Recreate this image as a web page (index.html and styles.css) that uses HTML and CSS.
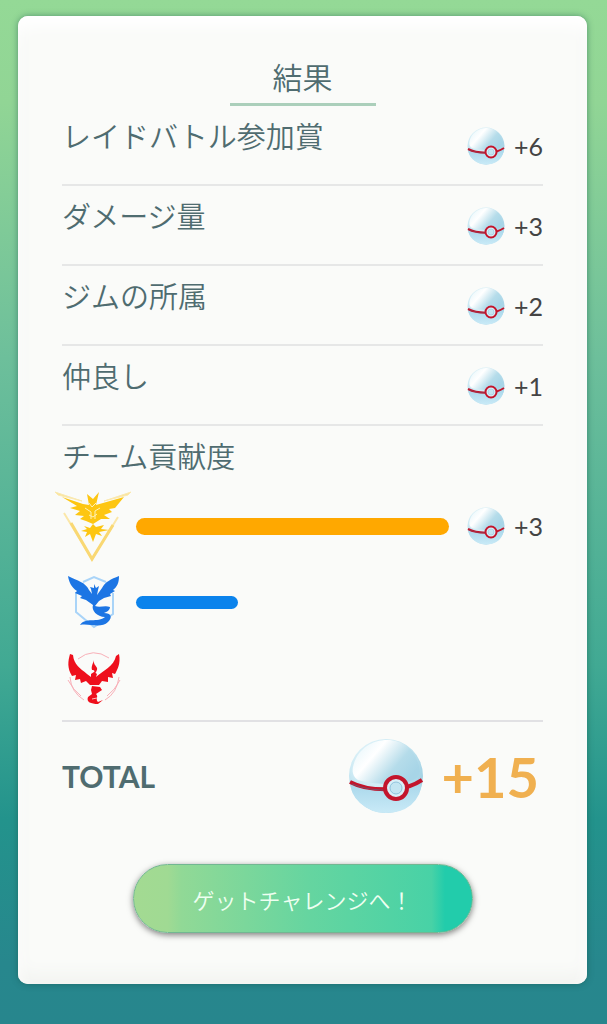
FILE: index.html
```html
<!DOCTYPE html>
<html lang="ja">
<head>
    <meta charset="UTF-8">
    <meta name="viewport" content="width=device-width, initial-scale=1.0">
    <title>結果</title>
    <link rel="stylesheet" href="styles.css">
</head>
<body>
    <!-- Shared ball drawing -->
    <svg class="defs" width="0" height="0" aria-hidden="true">
        <defs>
            <radialGradient id="ballBase" cx="38%" cy="30%" r="75%">
                <stop offset="0" stop-color="#f4fcfe"/>
                <stop offset="0.5" stop-color="#cdeaf4"/>
                <stop offset="1" stop-color="#92c9de"/>
            </radialGradient>
            <linearGradient id="ballShine" x1="0.1" y1="0.1" x2="1" y2="0.6">
                <stop offset="0" stop-color="#e9f7fb"/>
                <stop offset="0.3" stop-color="#ffffff"/>
                <stop offset="0.7" stop-color="#b5dcea"/>
                <stop offset="1" stop-color="#a7d5e7"/>
            </linearGradient>
            <linearGradient id="ballLower" x1="0" y1="0" x2="0" y2="1">
                <stop offset="0" stop-color="#a5d5e9"/>
                <stop offset="1" stop-color="#c9eaf7"/>
            </linearGradient>
            <symbol id="ball" viewBox="0 0 74 76">
                <circle cx="37" cy="38" r="37" fill="url(#ballBase)"/>
                <path d="M1 43Q19 52 46 49Q62 48 73 42Q73 57 62 67Q52 75 37 75Q22 75 11 65Q1 56 1 43Z" fill="url(#ballLower)"/>
                <path d="M4 29C8 11 23 2 38 2C55 2 66 12 70 28C73 38 67 43 57 44C43 47 20 46 9 42C4 39 3 34 4 29Z" fill="url(#ballShine)"/>
                <path d="M1 44Q18 53 46 51Q61 50 73 42" fill="none" stroke="#c3152c" stroke-width="4"/>
                <path d="M3 46Q20 53 42 52" fill="none" stroke="#7d4a64" stroke-width="1"/>
                <circle cx="47" cy="50" r="11" fill="#d9eff8" stroke="#c3152c" stroke-width="4"/>
                <circle cx="47" cy="50" r="6" fill="#c3e5f2" stroke="#8fc3dc"/>
            </symbol>
        </defs>
    </svg>

    <main class="card">
        <h1 class="title">結果</h1>

        <ul class="reward-list">
            <li class="reward-row">
                <span class="label">レイドバトル参加賞</span>
                <span class="reward"><svg class="ball"><use href="#ball"/></svg>+6</span>
            </li>
            <li class="reward-row">
                <span class="label">ダメージ量</span>
                <span class="reward"><svg class="ball"><use href="#ball"/></svg>+3</span>
            </li>
            <li class="reward-row">
                <span class="label">ジムの所属</span>
                <span class="reward"><svg class="ball"><use href="#ball"/></svg>+2</span>
            </li>
            <li class="reward-row">
                <span class="label">仲良し</span>
                <span class="reward"><svg class="ball"><use href="#ball"/></svg>+1</span>
            </li>
        </ul>

        <section class="teams">
            <h2 class="label">チーム貢献度</h2>
            <div class="team-row">
                <svg class="emblem" viewBox="0 0 78 76" role="img" aria-label="黄チーム">
                    <path d="M0 4L27 13L3 7ZM76 4L49 13L73 7Z" fill="#fae49a" stroke="#fae9b0"/>
                    <path d="M9 25L37 71L63 29" fill="none" stroke="#fbe7a8" stroke-width="2"/>
                    <path d="M16 35L37 71L58 37" fill="none" stroke="#f9d873" stroke-width="3"/>
                    <path d="M7 9L28 16L34 17L32 6L38 11L44 4L41 17L48 15L69 9L60 20L54 21L57 24L49 27L55 31L46 31L38 36L31 33L25 31L29 28L20 27L25 23L15 20L22 18Z" fill="#fdc612"/>
                    <path d="M34 15L37 19L41 15M30 20L36 24V31M45 20L40 23V31M34 27L38 29L42 26" fill="none" stroke="#fff2b8" stroke-width="1"/>
                    <path d="M29 38L35 40L38 36L41 39L49 37L46 41L54 42L44 44L47 48L41 46L38 54L35 46L30 49L32 44L26 43L32 41Z" fill="#fdc612"/>
                </svg>
                <div class="track"><div class="bar bar-yellow"></div></div>
                <span class="reward"><svg class="ball"><use href="#ball"/></svg>+3</span>
            </div>
            <div class="team-row">
                <svg class="emblem" viewBox="0 0 78 76" role="img" aria-label="青チーム">
                    <path d="M21 28V48L39 63L58 50V29M28 18L39 13L51 18" fill="none" stroke="#a9d4f8" stroke-width="2"/>
                    <path d="M13 12C23 17 30 18 34 26L37 30L36 25L35 23L39 24L39 20L41 24L44 22L43 26L42 31L47 24C50 18 56 15 64 12C64 19 62 23 58 26L60 27L55 30L56 32L49 34L44 37L40 42C45 44 50 41 55 43C55 46 52 48 49 49C56 49 58 53 53 58C46 65 34 59 25 61C30 53 43 59 50 53C42 53 36 46 38 41L31 36L25 34L27 32L20 29L22 27C16 23 14 18 13 12Z" fill="#1c75e4"/>
                </svg>
                <div class="track"><div class="bar bar-blue"></div></div>
            </div>
            <div class="team-row">
                <svg class="emblem" viewBox="0 0 78 76" role="img" aria-label="赤チーム">
                    <path d="M23 19Q38 7 54 18M15 37Q16 52 29 60M64 37Q62 53 50 60M13 40Q18 50 26 56M65 40Q60 50 52 56" fill="none" stroke="#f8b0b8" stroke-width="1"/>
                    <path d="M15 14L18 15C19 25 25 28 32 34L36 37L36 34L39 32L42 34L41 37C48 31 59 26 61 16L64 14C66 24 62 30 60 34L57 33L58 38L53 37L53 42L47 41L44 45L35 45L31 41L26 43L25 39L20 40L21 35L17 36C12 28 13 21 15 14Z" fill="#ee0f1c"/>
                    <path d="M39 20C38 27 45 26 41 32L38 36C39 32 41 30 37 30C36 26 38 24 39 20ZM37 46L45 47L47 50L41 54C44 57 40 59 43 62L48 60L43 64C36 64 31 62 33 57L37 54L36 50Z" fill="#ee0f1c"/>
                    <path d="M37 59L42 58" stroke="#ffb5b9" stroke-width="1"/>
                </svg>
            </div>
        </section>

        <div class="total">
            <span class="total-label">TOTAL</span>
            <span class="total-reward"><svg class="ball ball-large"><use href="#ball"/></svg>+15</span>
        </div>

        <button class="challenge-btn" type="button">ゲットチャレンジへ！</button>
    </main>
</body>
</html>
```
FILE: styles.css
```css
* {
    margin: 0;
    padding: 0;
    box-sizing: border-box;
}

body {
    font-family: Lato, 'Noto Sans CJK JP', sans-serif;
    background: linear-gradient(180deg, #94d996 0%, #91d595 10%, #6dbf9b 35%, #41a993 65%, #23938c 80%, #27878d 94%, #27868d 100%);
    min-height: 100vh;
    padding: 16px 20px 40px 18px;
    color: #4f6c70;
}

.defs {
    position: absolute;
}

.card {
    display: flex;
    flex-direction: column;
    min-height: 968px;
    padding: 40px 44px 48px;
    background: #fafbf9;
    border-radius: 10px;
    box-shadow: 0 0 6px rgba(20, 80, 70, 0.5), inset 0 10px 16px #ffffff, inset 0 -10px 16px #f3f4f1;
}

.title {
    align-self: center;
    width: 146px;
    height: 50px;
    border-bottom: 3px solid #abcfbb;
    font-size: 30px;
    font-weight: 350;
    line-height: 42px;
    text-align: center;
}

.reward-list {
    list-style: none;
}

.reward-row {
    display: flex;
    justify-content: space-between;
    height: 80px;
    padding-top: 10px;
    border-bottom: 2px solid #e6e7e7;
}

.label {
    font-size: 29px;
    font-weight: 350;
    line-height: 42px;
}

.reward {
    display: flex;
    align-items: center;
    justify-content: space-between;
    width: 76px;
    height: 60px;
    color: #444444;
    font-size: 25px;
}

.ball {
    flex: none;
    width: 38px;
    height: 38px;
}

.teams {
    padding: 10px 0 4px;
    border-bottom: 2px solid #e1e1e4;
}

.teams .label {
    margin-bottom: 10px;
}

.team-row {
    display: flex;
    align-items: center;
    height: 76px;
    gap: 3px;
}

.emblem {
    flex: none;
    width: 78px;
    height: 76px;
    margin-left: -7px;
}

.track {
    flex: 1;
    margin-right: 15px;
}

.bar {
    height: 17px;
    border-radius: 9px;
}

.bar-yellow {
    background: #ffa800;
}

.bar-blue {
    width: 26%;
    height: 13px;
    background: #0b83ec;
}

.total {
    display: flex;
    align-items: center;
    justify-content: space-between;
    height: 108px;
    padding-right: 4px;
}

.total-label {
    font-size: 30px;
    font-weight: 700;
}

.total-reward {
    display: flex;
    align-items: center;
    gap: 18px;
    color: #f0b050;
    font-size: 56px;
    font-weight: 700;
}

.ball-large {
    width: 76px;
    height: 76px;
}

.challenge-btn {
    align-self: center;
    width: 340px;
    height: 69px;
    margin-top: 34px;
    border: 1px solid #72b792;
    border-radius: 35px;
    background: linear-gradient(90deg, #a3da92 0%, #a0da93 10%, #91d996 14%, #65d5a0 52%, #48d2a6 88%, #22ccab 92%, #22ccab 100%);
    box-shadow: 0 2px 6px rgba(0, 0, 0, 0.5);
    color: #eefff1;
    font-family: inherit;
    font-size: 22px;
    font-weight: 350;
    cursor: pointer;
}
```
